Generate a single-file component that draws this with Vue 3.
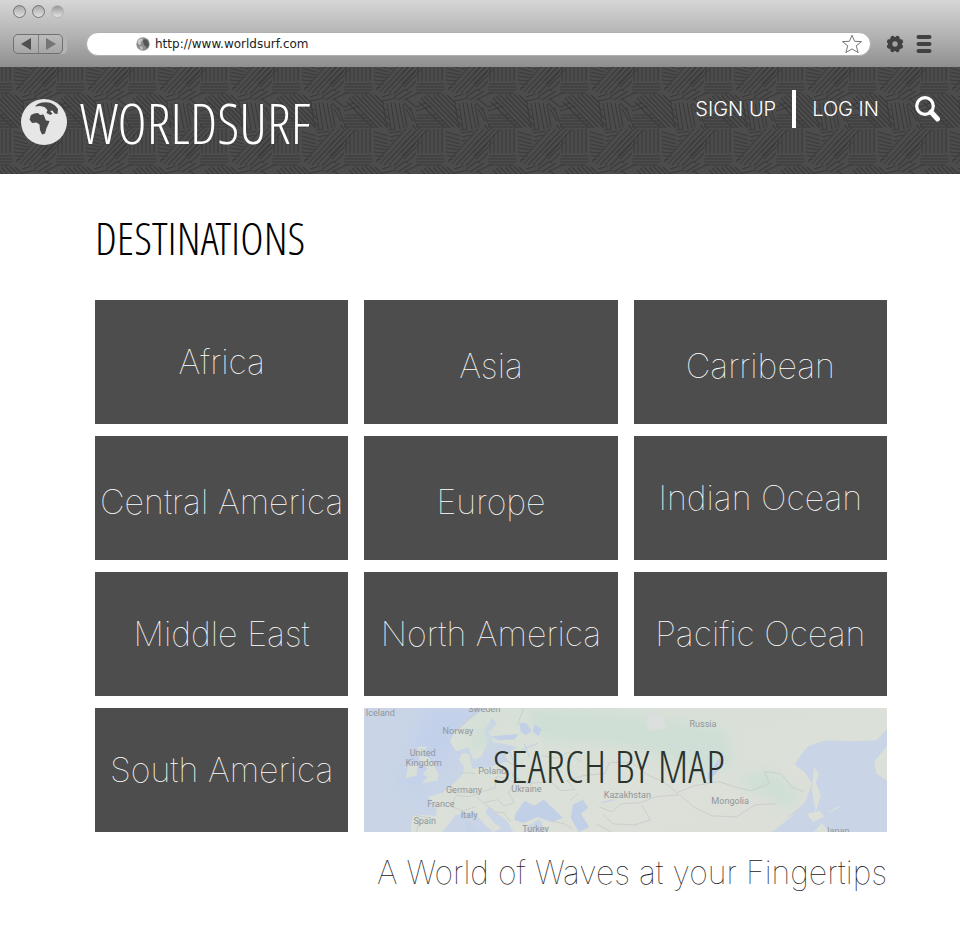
<script setup>
import { ref } from 'vue'

const address = ref('http://www.worldsurf.com')

const destinations = [
  { name: 'Africa' },
  { name: 'Asia', low: true },
  { name: 'Carribean', low: true },
  { name: 'Central America', low: true },
  { name: 'Europe', low: true },
  { name: 'Indian Ocean' },
  { name: 'Middle East' },
  { name: 'North America' },
  { name: 'Pacific Ocean' },
  { name: 'South America' },
]

const countries = [
  { name: 'Iceland', x: 18, y: 8 },
  { name: 'Sweden', x: 121, y: 4 },
  { name: 'Norway', x: 95, y: 26 },
  { name: 'United', x: 60, y: 48 },
  { name: 'Kingdom', x: 61, y: 58 },
  { name: 'Poland', x: 129, y: 65 },
  { name: 'Germany', x: 101, y: 84 },
  { name: 'Ukraine', x: 163, y: 83 },
  { name: 'France', x: 78, y: 98 },
  { name: 'Italy', x: 106, y: 109 },
  { name: 'Spain', x: 62, y: 115 },
  { name: 'Turkey', x: 172, y: 123 },
  { name: 'Kazakhstan', x: 263, y: 89 },
  { name: 'Russia', x: 338, y: 19 },
  { name: 'Mongolia', x: 365, y: 95 },
  { name: 'Japan', x: 471, y: 125 },
]
</script>

<template>
  <div class="page">
    <div class="chrome">
      <div class="lights">
        <span class="light"></span>
        <span class="light"></span>
        <span class="light light-faded"></span>
      </div>
      <div class="toolbar">
        <div class="history">
          <button type="button" aria-label="Back">
            <svg viewBox="0 0 24 18"><path d="M17 3V15L7 9Z" fill="#4f4f4f" /></svg>
          </button>
          <button type="button" aria-label="Forward">
            <svg viewBox="0 0 24 18"><path d="M7 3V15L17 9Z" fill="#757575" /></svg>
          </button>
        </div>
        <div class="address">
          <svg class="favicon" viewBox="0 0 14 14" aria-hidden="true">
            <circle cx="7" cy="7" r="6.700" fill="#8c8c8c" />
            <path d="M2 3Q4 1 7 1.500L6 4 4.500 5 5 7 3.500 8 1.500 6Z" fill="#c9c9c9" />
            <path d="M7.500 2.500Q10 1.500 12 4L13 8 11 11.500 9.500 9 8 8 7 5Z" fill="#555" />
            <path d="M4 9 6.500 9.500 7 12 5.500 13 3.500 11Z" fill="#bbb" />
          </svg>
          <input v-model="address" type="text" aria-label="Address" />
          <button type="button" class="star" aria-label="Bookmark">
            <svg viewBox="0 0 22 20">
              <path d="M11 1.200 13.600 7.300 20.600 7.600 15.200 11.800 17.200 18.600 11 14.900 4.800 18.600 6.800 11.800 1.400 7.600 8.400 7.300Z" fill="#fff" stroke="#777" />
            </svg>
          </button>
        </div>
        <button type="button" class="tool" aria-label="Settings">
          <svg viewBox="0 0 18 18">
            <g fill="#414141">
              <circle cx="9" cy="9" r="7" />
              <circle v-for="a in 8" :key="a" cx="9" cy="2.600" r="2.200" :transform="`rotate(${a * 45 - 22} 9 9)`" />
            </g>
            <circle cx="9" cy="9" r="2.700" fill="#a3a3a3" />
          </svg>
        </button>
        <button type="button" class="tool" aria-label="Menu">
          <svg viewBox="0 0 18 18">
            <path d="M3.500 2H14.500M3.500 9H14.500M3.500 16H14.500" stroke="#414141" stroke-width="4" stroke-linecap="round" />
          </svg>
        </button>
      </div>
    </div>

    <header class="banner">
      <svg class="weave" aria-hidden="true">
        <defs>
          <pattern id="weave" width="72" height="72" patternUnits="userSpaceOnUse" patternTransform="translate(56 -10)">
            <rect width="72" height="72" fill="#4c4c4c" />
            <g stroke="#3a3a3a" stroke-width="1.100" fill="none">
              <path d="M2 10V24M6 5V24M10 1V24M14 0V24M18 0V24M22 0V24M26 0V24" />
              <path d="M1 27H28M0 30H29M-2 33H28M-3 36H26" />
              <path d="M58 27 72 13M60 30 72 18M55 25 72 8M58 16 72 2M62 34 72 24M0 13 12 0M0 18 5 12M0 8 7 0M0 2 2 0" />
              <path d="M30 3 44 7M30 7 43 11M30 11 44 15M30 15 44 18M30 19 43 21M30 23 41 24M31 27 40 27M32 31 37 30" />
              <path d="M36 35 68 0M40 36 72 2M45 36 72 7M32 33 62 0M50 37 72 14" />
              <path d="M8 39 38 70M12 38 44 71M17 38 46 69M21 37 46 63M26 37 42 54M31 38 40 47M5 41 34 71M3 45 28 70" />
              <path d="M39 47 43 71M43 46 47 72M47 46 51 72M51 46 56 72M55 46 60 71M59 47 63 70" />
              <path d="M1 58H20M0 61H24M-1 64H27M-2 67H30M0 70H33" />
              <path d="M62 42 72 50M60 46 69 56M62 52 69 64M66 50 72 66M0 50 10 46M0 54 15 49M-1 66 4 72M68 68 72 72" />
              <path d="M50 40 62 32M54 43 68 34M60 43 72 37M0 37 5 35M38 40 48 37M38 44 53 41" />
              <path d="M45 4 57 2M46 8 55 6M45 12 50 11M44 1 52 0" />
            </g>
          </pattern>
        </defs>
        <rect width="100%" height="100%" fill="url(#weave)" />
      </svg>
      <a class="brand" href="#">
        <svg viewBox="0 0 46 46" aria-hidden="true">
          <circle cx="23" cy="23" r="23" fill="#e6e6e6" />
          <path d="M14 7.500Q16 4.500 21 3.500Q29 2 34 6.500L37 10 36.500 15 33.500 14.500 31.500 11.500 29 12 31.500 14.500 29.500 16 25.500 14 26.500 11 23.500 8 19 7Z" fill="#4a4a4a" />
          <path d="M10 16Q13 14 17 14L19 16 22.500 15.500 25 21.500 28.500 22 27 26 25.500 29 24 34.500 21 35.500 19 31 18.500 25.500 15.500 23.500 11 24 8.500 20.500Z" fill="#4a4a4a" />
        </svg>
        <span>WORLDSURF</span>
      </a>
      <nav class="account">
        <a href="#">SIGN UP</a>
        <span class="divider"></span>
        <a href="#">LOG IN</a>
        <button type="button" aria-label="Search">
          <svg viewBox="0 0 26 26">
            <circle cx="10" cy="10" r="8.300" fill="none" stroke="#fff" stroke-width="3.200" />
            <path d="M16 16 22.500 23" stroke="#fff" stroke-width="5" stroke-linecap="round" />
          </svg>
        </button>
      </nav>
    </header>

    <main class="content">
      <h1>DESTINATIONS</h1>
      <div class="grid">
        <a v-for="place in destinations" :key="place.name" href="#" class="tile" :class="{ low: place.low }">{{ place.name }}</a>
        <a href="#" class="map-tile">
          <svg class="map" viewBox="0 0 522 123" preserveAspectRatio="xMidYMid slice">
            <defs>
              <linearGradient id="land" x1="0" x2="1" y1="0" y2="1">
                <stop offset="0" stop-color="#d6e0d8" />
                <stop offset=".5" stop-color="#dbe0d8" />
                <stop offset="1" stop-color="#dcdfd8" />
              </linearGradient>
              <filter id="soft" x="-20%" y="-20%" width="140%" height="140%"><feGaussianBlur stdDeviation="6" /></filter>
              <filter id="haze" x="-30%" y="-20%" width="160%" height="140%"><feGaussianBlur stdDeviation="10" /></filter>
            </defs>
            <rect width="522" height="123" fill="#c9d5e6" />
            <path d="M60 0H125L90 44 70 70 45 95 40 70Z" fill="#c2d0ea" filter="url(#haze)" />
            <path d="M122 0H522V20L510 32 490 33 460 32 442 38 432 51 429 56 439 64 446 75 440 92 425 108 408 122 404 123H182L176 110 166 116 160 123H150L143 111 133 104 125 98 122 104 132 115 138 119 130 123 121 115 111 103 104 104 93 106 79 123H48L49 112 51 106 73 107 74 97 65 88 80 84 92 74 100 65 101 58 96 51 99 45 106 46 109 60 124 59 144 53 142 45 154 39 142 36 130 34 126 24 134 15 129 10 120 24 124 34 118 49 110 51 106 39 93 43 87 33 91 25 107 11Z" fill="url(#land)" />
            <path d="M55 39 64 38 61 47 67 50 72 58 76 66 75 72 59 75 65 68 60 66 65 60 57 53Z" fill="#d8dfd8" />
            <path d="M46 55 55 57 54 67 43 70Z" fill="#d8dfd8" />
            <path d="M100 111 111 116 119 123H104Z" fill="#c5d2e8" />
            <g filter="url(#soft)" fill="#cfdfd5">
              <path d="M160 0 280 8 360 20 370 55 335 65 280 42 230 35 180 32Z" />
              <path d="M370 68 403 62 424 75 434 88 421 101 400 87 386 82Z" />
              <path d="M110 24 122 12 126 35 108 45Z" />
            </g>
            <path d="M285 5 299 9 301 20 285 23 282 15Z" fill="#dbdfde" />
            <g fill="#c1cfe7">
              <path d="M152 105 161 92 171 97 180 91 193 103 199 109 188 113 174 108 160 114 151 111Z" />
              <path d="M209 96 219 91 224 99 217 105 225 118 215 123 207 109Z" />
              <path d="M156 15 163 15 168 23 162 27 157 23ZM171 16 178 21 175 28 169 23ZM128 28 155 26 151 31 135 32Z" />
              <path d="M343 65 354 50 358 52 351 65 343 72Z" />
            </g>
            <g fill="#dbe0d8">
              <path d="M448 58 453 65 450 75 455 86 450 103 446 82ZM441 105 454 102 458 108 447 113Z" />
              <path d="M508 53 522 36V73L510 65ZM448 123 456 114 463 123Z" />
            </g>
            <path d="M237 94 250 91 M145 40 151 55M161 36 166 49M157 42 174 35" stroke="#c1cfe7" fill="none" />
            <g fill="none" stroke="#c6cbc8" stroke-width=".8">
              <path d="M92 24 104 13 116 0M154 17 160 0M140 50 154 59 149 67 163 75 187 73 197 82 211 81 203 72 220 67 241 65 245 54 267 54 284 67 299 73 312 84 330 77 354 73 372 79 386 82 404 75 399 63 415 65 426 78 438 83" />
              <path d="M88 77 94 87 106 88 119 83 132 79 133 68 144 70 151 75 145 84 151 94 141 97 134 91 120 94 114 88M121 95 132 103 141 104 147 113M92 88 89 98 100 102 112 98M235 98 248 103 257 95 275 94 292 88 315 86 330 99 347 107 371 108 390 96 411 95" />
              <path d="M50 106 72 110M57 109 54 123M188 112 201 115 209 120M206 92 214 85M277 96 286 111 270 116 249 115 238 105M422 108 433 100M99 64 112 65M178 47 193 50 204 44 218 54M232 115 247 123" />
            </g>
            <path d="M463 103 474 98" stroke="#dbe0d8" />
            <g class="labels">
              <text v-for="c in countries" :key="c.name" :x="c.x" :y="c.y">{{ c.name }}</text>
            </g>
          </svg>
          <span class="map-title">SEARCH BY MAP</span>
        </a>
      </div>
      <p class="tagline">A World of Waves at your Fingertips</p>
    </main>
  </div>
</template>

<style>
body {
  background: #fff;
}
</style>

<style scoped>
.page {
  font-family: Inter, "Liberation Sans", sans-serif;
  color: #000;
}

button {
  padding: 0;
  border: 0;
  background: none;
  cursor: pointer;
}

a {
  color: inherit;
  text-decoration: none;
}

svg {
  display: block;
}

.chrome {
  display: flex;
  flex-direction: column;
  gap: 14px;
  padding: 5px 27px 11px 13px;
  background: linear-gradient(#d6d6d6, #b5b5b5 50%, #8f8f8f);
}

.lights {
  display: flex;
  gap: 6px;
}

.light {
  box-sizing: border-box;
  width: 13px;
  height: 13px;
  border: 1px solid #747474;
  border-radius: 50%;
  background: linear-gradient(#a8a8a8, #e0e0e0);
}

.light-faded {
  border-color: #b4b4b4;
  background: linear-gradient(#969696, #e4e4e4);
}

.toolbar {
  display: flex;
  align-items: center;
  height: 24px;
}

.history {
  display: flex;
  box-sizing: border-box;
  width: 50px;
  height: 20px;
  margin-right: 23px;
  border: 1px solid #707070;
  border-radius: 5px;
  background: linear-gradient(#bcbcbc, #a6a6a6);
  box-shadow: 4px 0 0 #b4b4b4;
}

.history button {
  flex: 1;
}

.history button + button {
  border-left: 1px solid #808080;
}

.history svg {
  width: 24px;
  height: 18px;
}

.address {
  display: flex;
  flex: 1;
  align-items: center;
  box-sizing: border-box;
  height: 24px;
  margin-right: 15px;
  padding: 0 7px 0 49px;
  border: 1px solid #b0b0b0;
  border-radius: 12px;
  background: #fff;
}

.favicon {
  width: 14px;
  height: 14px;
  margin-right: 5px;
}

.address input {
  flex: 1;
  min-width: 0;
  padding: 0;
  border: 0;
  outline: 0;
  background: none;
  color: #222;
  font: 12px/16px "DejaVu Sans", sans-serif;
}

.star svg {
  width: 22px;
  height: 20px;
}

.tool svg {
  width: 18px;
  height: 18px;
}

.tool + .tool {
  margin-left: 11px;
}

.banner {
  position: relative;
  display: flex;
  align-items: flex-start;
  justify-content: space-between;
  box-sizing: border-box;
  min-height: 107px;
  padding: 22px 19px 16px 21px;
  color: #fff;
}

.weave {
  position: absolute;
  inset: 0;
  width: 100%;
  height: 100%;
}

.brand,
.account {
  position: relative;
  display: flex;
  align-items: center;
}

.brand {
  gap: 13px;
  font: 300 56px/66px "Open Sans Condensed Light", "Open Sans Condensed", "Open Sans", sans-serif;
}

.brand svg {
  width: 46px;
  height: 46px;
}

.account {
  gap: 16px;
  font-size: 20px;
  font-weight: 300;
  line-height: 40px;
}

.divider {
  width: 4px;
  height: 38px;
  background: #fff;
}

.account button {
  margin-left: 20px;
}

.account button svg {
  width: 26px;
  height: 26px;
}

.content {
  padding: 32px 73px 40px 95px;
}

h1,
.map-title {
  font: 300 45px/64px "Open Sans Condensed Light", "Open Sans Condensed", "Open Sans", sans-serif;
}

h1 {
  margin: 0 0 30px;
}

.grid {
  display: grid;
  grid-template-columns: repeat(3, minmax(0, 1fr));
  grid-auto-rows: 124px;
  gap: 12px 16px;
}

.tile {
  display: flex;
  align-items: center;
  justify-content: center;
  box-sizing: border-box;
  background: #4d4d4d;
  color: #fff;
  font-size: 34px;
  font-weight: 100;
  line-height: 40px;
  white-space: nowrap;
}

.tile.low {
  padding-top: 8px;
}

.map-tile {
  position: relative;
  grid-column: span 2;
  display: flex;
  align-items: center;
  justify-content: center;
  box-sizing: border-box;
  padding: 0 34px 8px 0;
  overflow: hidden;
}

.map {
  position: absolute;
  inset: 0;
  width: 100%;
  height: 100%;
}

.labels {
  fill: #92969a;
  font: 9px Roboto, sans-serif;
  text-anchor: middle;
}

.map-title {
  position: relative;
  color: #2b332e;
}

.tagline {
  margin: 21px 0 0;
  color: #222;
  font-size: 32px;
  font-weight: 100;
  line-height: 40px;
  text-align: right;
}
</style>
